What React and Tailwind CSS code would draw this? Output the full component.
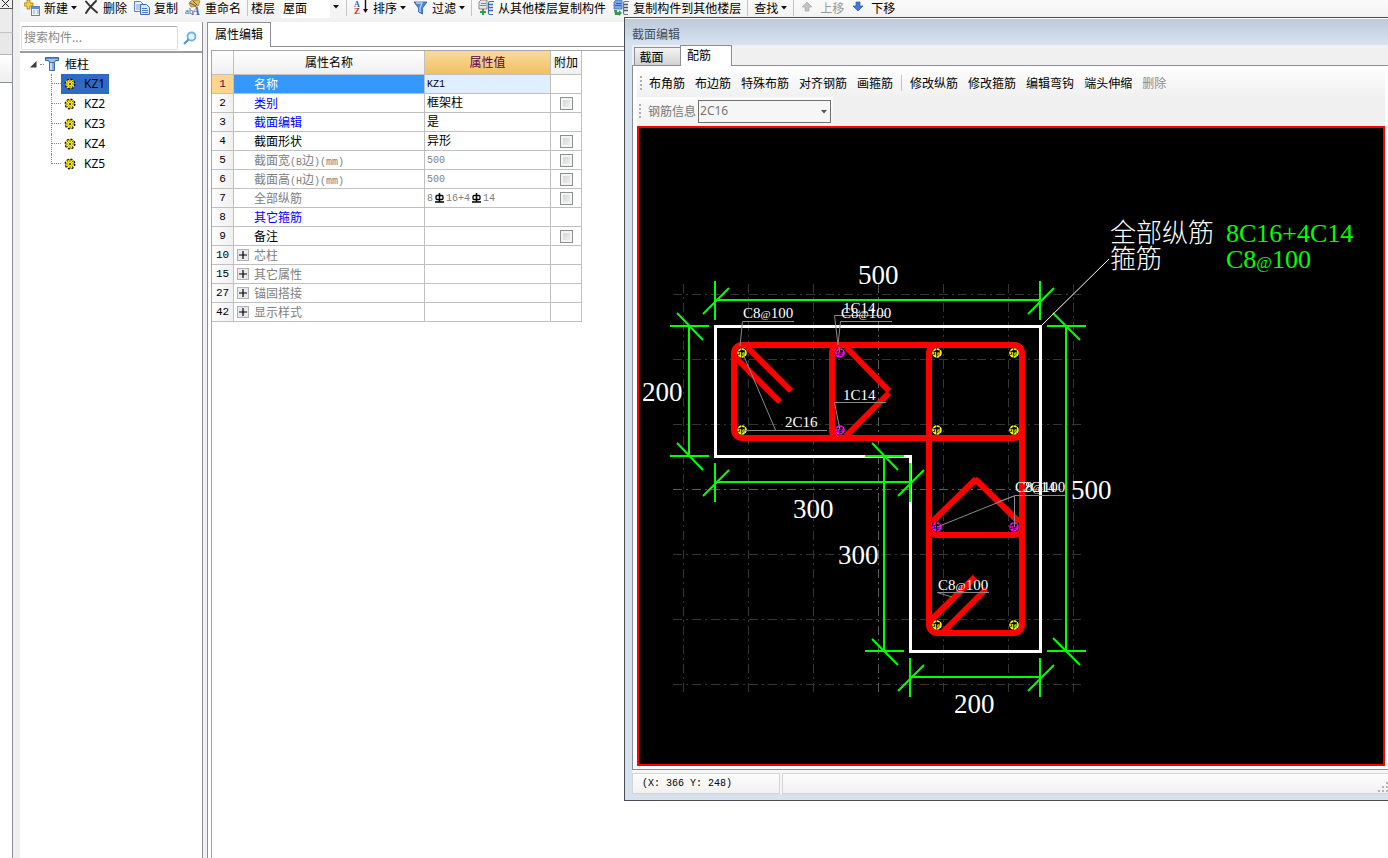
import { useState } from 'react'

const rows = [
  { n: 1, name: '名称', value: 'KZ1', tone: 'selected' },
  { n: 2, name: '类别', value: '框架柱', tone: 'blue', check: true },
  { n: 3, name: '截面编辑', value: '是', tone: 'blue' },
  { n: 4, name: '截面形状', value: '异形', tone: 'black', check: true },
  { n: 5, name: '截面宽(B边)(mm)', value: '500', tone: 'gray', check: true },
  { n: 6, name: '截面高(H边)(mm)', value: '500', tone: 'gray', check: true },
  { n: 7, name: '全部纵筋', value: '8#16+4#14', tone: 'gray', check: true },
  { n: 8, name: '其它箍筋', value: '', tone: 'blue' },
  { n: 9, name: '备注', value: '', tone: 'black', check: true },
  { n: 10, name: '芯柱', value: '', tone: 'gray', group: true },
  { n: 15, name: '其它属性', value: '', tone: 'gray', group: true },
  { n: 27, name: '锚固搭接', value: '', tone: 'gray', group: true },
  { n: 42, name: '显示样式', value: '', tone: 'gray', group: true },
]

const tones = {
  selected: 'text-white bg-[#3399ff]',
  blue: 'text-[#0000ff]',
  black: 'text-black',
  gray: 'text-[#808080]',
}

const columns = ['KZ1', 'KZ2', 'KZ3', 'KZ4', 'KZ5']

function Caret() {
  return (
    <svg width="6" height="4" viewBox="0 0 6 4" className="shrink-0">
      <path d="M0 0h6L3 3.5z" fill="#111" />
    </svg>
  )
}

function Sep() {
  return <span className="-mx-px w-px h-4 bg-[#c4c4c4] shrink-0" />
}

function Tool({ icon, children, menu, disabled }) {
  return (
    <button type="button" disabled={disabled}
      className="flex items-center h-4 shrink-0 whitespace-nowrap text-black disabled:text-[#9a9a9a]">
      {icon && <span className="mr-1">{icon}</span>}
      {children}
      {menu && <span className="ml-[3px]"><Caret /></span>}
    </button>
  )
}

function NewIcon() {
  return (
    <svg width="16" height="16" viewBox="0 0 16 16">
      <path d="M3 0h3v3h3v3H6v3H3V6H0V3h3z" fill="#f3cf3c" stroke="#a67c12" strokeWidth=".8" />
      <rect x="7.5" y="6.5" width="8" height="9" fill="#eef5ff" stroke="#5e86bd" />
      <path d="M8 7h7v2H8z" fill="#5b92d8" />
      <path d="M9 11h2m2 0h2M9 13h2m2 0h2" stroke="#7da2d4" />
    </svg>
  )
}

function CrossIcon() {
  return (
    <svg width="15" height="16" viewBox="0 0 15 16">
      <path d="M2 1.5c3 4 6 7 11 11M12 1C8 5 5 8 2 13" stroke="#333" strokeWidth="1.9" fill="none" strokeLinecap="round" />
    </svg>
  )
}

function CopyIcon() {
  return (
    <svg width="16" height="16" viewBox="0 0 16 16">
      <path d="M.5 1.5h6l3 3v7h-9z" fill="#e8f1fd" stroke="#5b83bd" />
      <path d="M2 5h5M2 7h5M2 9h5" stroke="#7fa6dc" />
      <path d="M6.5 4.5h6l3 3v7h-9z" fill="#dbe9fb" stroke="#3f6fb4" />
      <path d="M8 8.5h5m-5 2h6m-6 2h6" stroke="#4b80cc" />
    </svg>
  )
}

function RenameIcon() {
  return (
    <svg width="16" height="16" viewBox="0 0 16 16">
      <path d="M4 3c3-4 7-3 11-2l-2 5-7 1z" fill="#e2bd5d" stroke="#8d6c25" strokeWidth=".7" />
      <path d="M5 3l6 3M8 1l4 4" stroke="#6f5520" />
      <text x="0" y="14" fontSize="9" fontFamily="Liberation Serif" fill="#555">ab</text>
      <text x="7" y="15" fontSize="12" fontWeight="bold" fontStyle="italic" fontFamily="Liberation Serif" fill="#3467c4">A</text>
    </svg>
  )
}

function SortIcon() {
  return (
    <svg width="16" height="16" viewBox="0 0 16 16">
      <text x="1" y="7" fontSize="8" fontFamily="Liberation Serif" fontWeight="bold" fill="#2c5db4">A</text>
      <text x="1" y="14" fontSize="9" fontFamily="Liberation Serif" fontWeight="bold" fill="#b23a32">Z</text>
      <path d="M12.5 0v11" stroke="#111" strokeWidth="1.4" />
      <path d="M10 9h5l-2.500 4z" fill="#111" />
    </svg>
  )
}

function FilterIcon() {
  return (
    <svg width="15" height="16" viewBox="0 0 15 16">
      <path d="M1 2h13L9.500 8v6l-4-2V8z" fill="#4c86dc" stroke="#2d5ca8" strokeWidth=".8" />
      <path d="M3 3h6L7 8v4" fill="none" stroke="#b8d4fa" strokeWidth="1.300" />
    </svg>
  )
}

function FloorCopyIcon({ blue }) {
  return (
    <svg width="16" height="16" viewBox="0 0 16 16">
      <path d={blue ? 'M3 0h6v9H1V2z' : 'M3 0h6v9H1V2z'} fill={blue ? '#7ba6e6' : '#e4e4e4'} stroke={blue ? '#3f6fb4' : '#777'} strokeWidth=".8" />
      <path d="M3 3.500h5M2 5.500h6" stroke={blue ? '#2d62b8' : '#888'} />
      <path d="M16 1.500h-4q-1.500 0-1.500 1.500v10q0 1.500 1.500 1.500h3" fill="none" stroke={blue ? '#6b7684' : '#3c6fb8'} strokeWidth="1.200" />
      <path d="M11 4.500h4M11 7.500h4M11 10.500h4" stroke={blue ? '#4b5662' : '#2f6fc4'} strokeWidth="1.500" />
      {blue
        ? <path d="M1 10h3v2h2v-2l3 3-3 3v-1H2z" fill="#2aa04a" />
        : <path d="M5 9v6M2 12h6" stroke="#2aa04a" strokeWidth="2" />}
    </svg>
  )
}

function ArrowIcon({ down }) {
  return (
    <svg width="16" height="16" viewBox="-1 0 16 16">
      {down
        ? <path d="M4 2h4v4h3l-5 5-5-5h3z" fill="#4478dd" stroke="#2c56b0" strokeWidth=".7" />
        : <path d="M4 11h4V7h3L6 2 1 7h3z" fill="#c2c2c2" stroke="#aaa" strokeWidth=".7" />}
    </svg>
  )
}

function Toolbar() {
  return (
    <header className="flex h-[22px] items-start gap-[7px] overflow-hidden bg-linear-to-b from-[#fbfbfb] to-[#f0f0f0] pl-1 text-xs">
      <Tool icon={<NewIcon />} menu>新建</Tool>
      <Tool icon={<CrossIcon />}>删除</Tool>
      <Tool icon={<CopyIcon />}>复制</Tool>
      <Tool icon={<RenameIcon />}>重命名</Tool>
      <Sep />
      <label htmlFor="floor" className="-ml-[3px] -mr-px h-4 shrink-0 leading-4">楼层</label>
      <span className="relative -mr-[2px] flex h-[18px] shrink-0 bg-white">
        <select id="floor" className="h-4 w-[61px] appearance-none bg-transparent pl-[2px] leading-4">
          <option>屋面</option>
        </select>
        <span className="pointer-events-none absolute inset-y-0 right-0 flex w-3 items-center justify-center bg-[#f4f4f4] pb-1"><Caret /></span>
      </span>
      <Sep />
      <Tool icon={<SortIcon />} menu>排序</Tool>
      <Tool icon={<FilterIcon />} menu>过滤</Tool>
      <Sep />
      <Tool icon={<FloorCopyIcon />}>从其他楼层复制构件</Tool>
      <Tool icon={<FloorCopyIcon blue />}>复制构件到其他楼层</Tool>
      <Sep />
      <Tool menu>查找</Tool>
      <Sep />
      <Tool icon={<ArrowIcon />} disabled>上移</Tool>
      <Tool icon={<ArrowIcon down />}>下移</Tool>
    </header>
  )
}

function LeftStrip() {
  return (
    <div className="flex w-[13px] shrink-0 flex-col">
      <div className="flex h-[9px] items-start justify-center border-r border-b border-[#555] bg-[#f0f0f0]">
        <svg width="8" height="8" viewBox="0 0 8 8"><path d="M0 0l7 7M7 0L0 7" stroke="#222" /></svg>
      </div>
      <div className="h-6 border-r border-b border-[#8c8e97] border-b-[#c3c3c3] bg-[#ececec]" />
      <div className="h-[22px] border-r border-b border-[#8c8e97] border-b-[#b5b5b5] bg-[#e8e8e8]" />
      <div className="h-7 border-r border-b border-[#8c8e97] bg-linear-to-b from-white to-[#eee]" />
      <div className="flex-1 border-r border-[#8c8e97] bg-white" />
    </div>
  )
}

function GearIcon() {
  return (
    <svg width="12" height="12" viewBox="0 0 12 12" className="shrink-0">
      <circle cx="6" cy="6" r="4.800" fill="#ffee1a" strokeWidth="1.400" stroke="#111" strokeDasharray="2 1.770" />
      <path d="M6 1v10M1 6h10M2.500 2.500l7 7M9.500 2.500l-7 7" stroke="#333" strokeWidth=".7" />
      <circle cx="6" cy="6" r="2.200" fill="#ffee1a" />
      <circle cx="6" cy="6" r="1" fill="#111" />
    </svg>
  )
}

function TreePanel() {
  const [current, setCurrent] = useState('KZ1')
  return (
    <aside className="flex w-[183px] shrink-0 flex-col border-r border-[#8c8e97] bg-white text-xs">
      <div className="flex h-[31px] items-center border-b-2 border-[#9a9ca4] pt-[3px]">
        <label htmlFor="search" className="sr-only">搜索构件</label>
        <input id="search" placeholder="搜索构件..."
          className="h-6 min-w-0 flex-1 rounded-[2px] border border-[#dcdde2] border-t-[#abadb3] px-[2px] pb-[3px] ml-px outline-none placeholder:text-[#8a8a8a]" />
        <button type="button" aria-label="搜索" className="flex w-6 justify-center">
          <svg width="14" height="14" viewBox="0 0 14 14">
            <circle cx="8.500" cy="5.500" r="4" fill="#e9f6ff" stroke="#68b2e8" strokeWidth="1.800" />
            <path d="M5.500 8.500L1 13" stroke="#4c96d4" strokeWidth="2.200" />
          </svg>
        </button>
      </div>
      <div className="flex h-[21px] items-center pl-[10px] pt-px">
        <svg width="7" height="7" viewBox="0 0 7 7"><path d="M6.500 0v6.500H0z" fill="#3c3c3c" /></svg>
        <span className="ml-[3px] mr-px w-1 border-b border-dotted border-[#888]" />
        <svg width="14" height="16" viewBox="0 0 14 16">
          <path d="M.5 1.500h13v3h-3l-1 2H4.500l-1-2h-3z" fill="#9dc0ee" stroke="#2d5a9e" />
          <path d="M1 2h12" stroke="#3e73c4" strokeWidth="1.500" />
          <path d="M4.500 6.500h5v8h-5z" fill="#c6dcf8" stroke="#3f6cae" />
          <path d="M8 7v7" stroke="#6d9cdc" strokeWidth="1.500" />
        </svg>
        <span className="ml-[6px]">框柱</span>
      </div>
      <ul>
        {columns.map((c, i) => (
          <li key={c} className="flex h-5 pl-[31px]">
            <span className={`w-[10px] border-l border-dotted border-[#888] ${i === columns.length - 1 ? 'h-[10px]' : 'h-5'}`}>
              <span className="block h-[10px] border-b border-dotted border-[#888]" />
            </span>
            <button type="button" onClick={() => setCurrent(c)}
              className={`flex h-5 items-center gap-2 pl-[3px] pr-1 ${current === c ? 'bg-[#316ac5]' : ''}`}>
              <GearIcon />
              <span className="font-['Noto_Sans']">{c}</span>
            </button>
          </li>
        ))}
      </ul>
    </aside>
  )
}

function Rebar() {
  return (
    <svg width="13" height="10" viewBox="0 0 13 10" className="inline-block align-[-2px]">
      <path d="M6.500 0v9M2 9h9" stroke="#000" strokeWidth="1.500" />
      <rect x="3" y="2.500" width="7" height="4" rx="1" fill="none" stroke="#000" strokeWidth="1.300" />
    </svg>
  )
}

// half-width characters sit on a 6px pitch beside the 12px full-width ones
function GridText({ children }) {
  return children.split(/([\x20-\x7e]+)/).map((part, i) => {
    if (!/^[\x20-\x7e]+$/.test(part)) return part
    return (
      <span key={i} className="text-[10px]">
        {part.split(/(#)/).map((p, j) => (p === '#' ? <Rebar key={j} /> : p))}
      </span>
    )
  })
}

function PropertyGrid() {
  const cell = 'border-r border-b border-[#c0c0c0] p-0'
  return (
    <table className="w-[370px] table-fixed border-separate border-spacing-0 text-xs font-['Liberation_Mono','Noto_Sans_CJK_SC',monospace]">
      <colgroup>
        <col className="w-[22px]" />
        <col className="w-[191px]" />
        <col className="w-[126px]" />
        <col className="w-[31px]" />
      </colgroup>
      <thead>
        <tr className="h-6 bg-linear-to-b from-white to-[#efefef]">
          <th className={cell} />
          <th className={`${cell} pt-[3px] font-normal`}>属性名称</th>
          <th className={`${cell} bg-linear-to-b from-[#f9d99f] to-[#f1c05f] pt-[3px] font-normal text-[#5a0050]`}>属性值</th>
          <th className={`${cell} pt-[3px] font-normal`}>附加</th>
        </tr>
      </thead>
      <tbody>
        {rows.map(r => (
          <tr key={r.n} className="h-[19px] leading-[18px]">
            <td className={`${cell} text-center text-[11px] ${r.n === 1 ? 'bg-[#ffd58d] text-[#5a0050]' : 'bg-linear-to-r from-[#fdfdfd] to-[#f0f0f0]'}`}>{r.n}</td>
            <td className={`${cell} ${tones[r.tone]}`}>
              <div className="flex h-[18px] items-center">
                <span className="flex w-5 shrink-0 pl-[3px]">
                  {r.group && (
                    <button type="button" aria-label={r.name} className="flex size-3 items-center justify-center border border-[#b0b0b0] bg-[#e8e8ee]">
                      <svg width="8" height="8" viewBox="0 0 8 8"><path d="M4 0v8M0 4h8" stroke="#000" strokeWidth="1.200" /></svg>
                    </button>
                  )}
                </span>
                <span className="whitespace-nowrap pt-1 leading-[18px]"><GridText>{r.name}</GridText></span>
              </div>
            </td>
            <td className={`${cell} ${r.n === 1 ? 'bg-[#dfefff]' : ''} ${r.tone === 'gray' ? 'text-[#808080]' : 'text-black'}`}>
              <div className="flex h-[18px] items-center whitespace-nowrap pl-[2px]">
                <span className={/[\u4e00-\u9fff]/.test(r.value) ? 'pt-[2px]' : ''}><GridText>{r.value}</GridText></span>
              </div>
            </td>
            <td className={cell}>
              <div className="flex h-[18px] items-center justify-center">
                {r.check && (
                  <input type="checkbox" aria-label={r.name}
                    className="size-[13px] appearance-none border border-[#8e8f8f] bg-linear-to-br from-[#cbcfd5] to-[#f6f6f6] ring-2 ring-inset ring-[#f4f4f4]" />
                )}
              </div>
            </td>
          </tr>
        ))}
      </tbody>
    </table>
  )
}

function PropertyPanel() {
  return (
    <main className="flex min-w-0 flex-1 flex-col">
      <div className="flex h-[25px]" role="tablist">
        <button type="button" role="tab" className="w-16 border-t border-r border-l border-[#8c8e97] bg-white pb-[2px] text-xs">属性编辑</button>
        <span className="flex-1 border-b border-[#8c8e97] bg-white" />
      </div>
      <div className="flex-1 border-l border-[#8c8e97] bg-white pl-[3px] pt-[3px]">
        <div className="h-full border-t border-l border-[#a5a7ad]">
          <PropertyGrid />
        </div>
      </div>
    </main>
  )
}

const gridX = [683.5, 748.5, 813.5, 878.5, 943.5, 1008.5, 1073.5]
const gridY = [294.5, 359.5, 424.5, 489.5, 554.5, 619.5, 684.5]

const bars16 = [[742, 353], [937, 353], [1014, 353], [742, 430], [937, 430], [1014, 430], [937, 625], [1014, 625]]
const bars14 = [[840, 353], [840, 430], [937, 527], [1014, 527]]

const dims = [
  { x: 858, y: 284, t: '500' },
  { x: 642, y: 401, t: '200' },
  { x: 793, y: 518, t: '300' },
  { x: 838, y: 564, t: '300' },
  { x: 954, y: 713, t: '200' },
  { x: 1071, y: 499, t: '500' },
]

const notes = [
  { x: 743, y: 318, t: 'C8@100' },
  { x: 843, y: 313, t: '1C14' },
  { x: 841, y: 318, t: 'C8@100' },
  { x: 843, y: 400, t: '1C14' },
  { x: 785, y: 427, t: '2C16' },
  { x: 1015, y: 492, t: 'C8@100' },
  { x: 1023, y: 492, t: '2C14' },
  { x: 938, y: 590, t: 'C8@100' },
]

function Stirrup({ children, small }) {
  const [a, b] = children.split('@')
  if (b === undefined) return children
  return <>{a}<tspan fontSize={small}>@</tspan>{b}</>
}

function Bar({ x, y, color, label }) {
  return (
    <g>
      <circle cx={x} cy={y} r="4" fill="#000" stroke={color} strokeWidth="1.600" strokeDasharray="3 .6" />
      <text x={x} y={y + 3} textAnchor="middle" fontSize="7" fontWeight="bold" fill={color}>{label}</text>
    </g>
  )
}

function SectionDrawing() {
  return (
    <svg viewBox="639 128 744 634" preserveAspectRatio="xMinYMin meet" className="block h-full w-full font-['Liberation_Serif','Noto_Sans_CJK_SC',serif]">
      {/* axes grid */}
      <g strokeDasharray="9 4 2 4" fill="none">
        {gridX.map((x, i) => <path key={x} d={`M${x} 284V694`} stroke={i === 3 ? '#5c5c5c' : '#343434'} />)}
        {gridY.map((y, i) => <path key={y} d={`M673 ${y}H1084`} stroke={i === 3 ? '#5c5c5c' : '#343434'} />)}
      </g>

      {/* concrete outline */}
      <path d="M715.500 326.500H1040.500V651.500H910.500V456.500H715.500Z" fill="none" stroke="#fff" strokeWidth="3" />

      {/* stirrups and hooks */}
      <g fill="none" stroke="#f00" strokeWidth="6">
        <rect x="734" y="345" width="288" height="93" rx="8" />
        <rect x="929" y="345" width="93" height="288" rx="8" />
        <path d="M736 358L780 402M747 347L791 391" />
        <path d="M840 345q-8 0-8 8v77q0 8 8 8M846 347L889 391M846 436L889 393" />
        <path d="M929 527q0 8 8 8h77q8 0 8-8M932 522L976 479M975 479L1019 522" />
        <path d="M930 621L975 577M942 633L986 589" />
      </g>

      {bars16.map(([x, y]) => <Bar key={`${x}-${y}`} x={x} y={y} color="#ff0" label="16" />)}
      {bars14.map(([x, y]) => <Bar key={`${x}-${y}`} x={x} y={y} color="#f0f" label="14" />)}

      {/* dimension lines */}
      <g fill="none" stroke="#0f0" strokeWidth="2">
        <path d="M715 300H1040M715 281V320M1040 281V320M703 314L729 288M1028 314L1054 288" />
        <path d="M689 326V456M670 326H709M670 456H709M677 313L703 340M677 443L703 470" />
        <path d="M715 482H911M715 463V502M910 463V502M703 496L729 470M898 496L924 470" />
        <path d="M884 456V651M865 456H904M865 651H904M872 443L898 470M872 639L898 665" />
        <path d="M910 677H1040M910 658V697M1040 658V697M898 691L924 665M1028 691L1054 665" />
        <path d="M1066 326V651M1047 326H1086M1047 651H1086M1053 313L1080 340M1053 638L1080 665" />
      </g>

      {/* leaders */}
      <g fill="none" stroke="#8a8a8a">
        <path d="M794 321.500H742.500L740 346M743 354L775.500 430M743 430.500H827" />
        <path d="M886 315.500H834.500L838 345M892 321.500H840.500L838 345M839 347L840 353" />
        <path d="M886 402.500H834.500L840 430" />
        <path d="M1066 495.500H1014.500V527M1014 496L937 527M1014 496L998 502" />
        <path d="M989 592.500H937L952 597" />
      </g>
      <path d="M1041 326L1109 259" stroke="#fff" />

      <g fill="#fff" fontSize="27">
        {dims.map(d => <text key={`${d.x}-${d.y}`} x={d.x} y={d.y}>{d.t}</text>)}
      </g>
      <g fill="#fff" fontSize="15">
        {notes.map(d => <text key={`${d.x}-${d.y}`} x={d.x} y={d.y}><Stirrup small="11">{d.t}</Stirrup></text>)}
      </g>
      <g fontSize="26" fontWeight="300">
        <text x="1110" y="242" fill="#fff">全部纵筋</text>
        <text x="1110" y="268" fill="#fff">箍筋</text>
        <text x="1226" y="242" fill="#0f0">8C16+4C14</text>
        <text x="1226" y="268" fill="#0f0"><Stirrup small="17">C8@100</Stirrup></text>
      </g>
    </svg>
  )
}

function Grip() {
  return (
    <svg width="3" height="14" viewBox="0 0 3 14" className="shrink-0">
      <path d="M1 0v14" stroke="#b0b0b0" strokeWidth="2" strokeDasharray="2 2" />
    </svg>
  )
}

function SectionDialog() {
  return (
    <section className="absolute top-[17px] right-0 bottom-[57px] left-[624px] flex flex-col border border-r-0 border-[#4a4c54] bg-[#d7e2ef] pb-[6px] pl-[7px] text-xs">
      <h2 className="-ml-[7px] flex h-[27px] shrink-0 items-center border-t border-white bg-linear-to-b from-[#bccad9] to-[#d7e3f1] pl-[7px] pt-1 text-[#444c58]">截面编辑</h2>
      <div className="flex h-[21px] shrink-0 items-end bg-[#f0f0f0]" role="tablist">
        <span className="h-full w-[2px] border-b border-[#8c8e97]" />
        <button type="button" role="tab" className="h-[19px] w-[46px] border border-r-0 border-[#8c8e97] bg-linear-to-b from-[#f4f4f4] to-[#d2d2d2] pr-3">截面</button>
        <button type="button" role="tab" className="h-full w-[52px] border border-b-0 border-[#8c8e97] bg-white pr-[14px] pb-[2px]">配筋</button>
        <span className="h-full flex-1 border-b border-[#8c8e97]" />
      </div>

      <div className="flex min-h-0 flex-1 flex-col border-b border-l border-[#8c8e97] bg-white pt-[3px] pr-[3px] pb-[3px] pl-1">
        <div className="flex h-[28px] shrink-0 items-center gap-[10px] overflow-hidden bg-linear-to-b from-[#fdfdfd] to-[#f0f0f0] pl-[3px] whitespace-nowrap">
          <span className="-mr-1"><Grip /></span>
          <button type="button">布角筋</button>
          <button type="button">布边筋</button>
          <button type="button">特殊布筋</button>
          <button type="button">对齐钢筋</button>
          <button type="button">画箍筋</button>
          <span className="-mx-[2px] h-4 w-px shrink-0 bg-[#c4c4c4]" />
          <button type="button">修改纵筋</button>
          <button type="button">修改箍筋</button>
          <button type="button">编辑弯钩</button>
          <button type="button">端头伸缩</button>
          <button type="button" disabled className="text-[#8d8d8d]">删除</button>
        </div>
        <div className="flex h-[29px] shrink-0 items-center bg-[#f0f0f0] text-[#777]">
          <div className="flex h-full items-center bg-linear-to-b from-[#fbfbfb] to-[#f1f1f1] pb-px pr-[2px] pl-[2px]">
            <Grip />
            <label htmlFor="rebar" className="ml-[6px] mr-[2px] whitespace-nowrap">钢筋信息</label>
            <span className="relative flex">
              <select id="rebar" className="h-[23px] w-[133px] appearance-none border border-[#6f6f6f] bg-[#f6f6f6] pl-px font-['Noto_Sans']">
                <option>2C16</option>
              </select>
              <svg width="6" height="4" viewBox="0 0 6 4" className="pointer-events-none absolute top-[10px] right-1"><path d="M0 0h6L3 3.500z" fill="#555" /></svg>
            </span>
          </div>
        </div>
        <div className="min-h-0 flex-1 border-2 border-[#ff0000] bg-black">
          <SectionDrawing />
        </div>
      </div>

      <footer className="flex h-[24px] shrink-0 gap-[2px] bg-[#f6f6f6] pt-[3px]">
        <span className="flex w-[148px] items-center border border-[#d4d4d4] bg-linear-to-b from-[#fdfdfd] to-[#f1f1f1] pl-[9px] font-['Liberation_Mono',monospace] text-[10px] text-black">(X: 366 Y: 248)</span>
        <span className="flex flex-1 items-end justify-end border border-r-0 border-[#d4d4d4] bg-linear-to-b from-[#fdfdfd] to-[#f1f1f1]">
          <svg width="10" height="12" viewBox="0 0 10 12"><path d="M8 1h2v2H8zM4 5h2v2H4zM8 5h2v2H8zM0 9h2v2H0zM4 9h2v2H4zM8 9h2v2H8z" fill="#b4b4b4" /></svg>
        </span>
      </footer>
    </section>
  )
}

export default function App() {
  return (
    <div className="relative flex min-h-screen overflow-hidden bg-[#f0f0f0] text-black font-['Noto_Sans_CJK_SC',sans-serif]">
      <LeftStrip />
      <div className="ml-[7px] flex min-w-0 flex-1 flex-col">
        <Toolbar />
        <div className="flex flex-1 gap-1">
          <TreePanel />
          <PropertyPanel />
        </div>
      </div>
      <SectionDialog />
    </div>
  )
}
